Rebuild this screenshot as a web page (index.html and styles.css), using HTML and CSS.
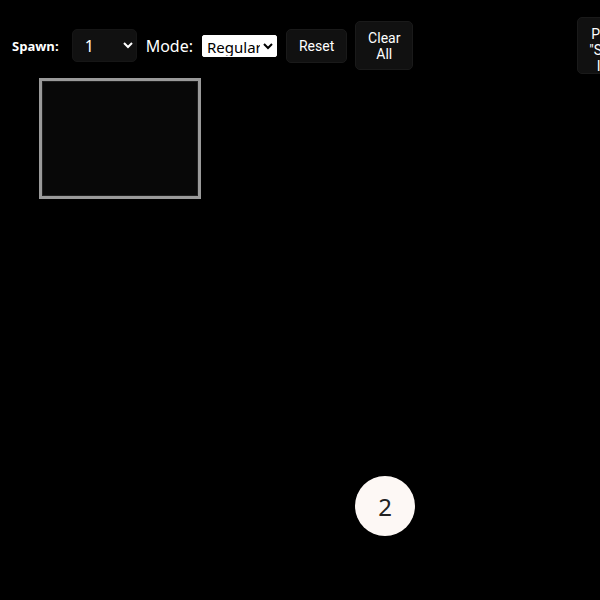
FILE: index.html
```html
<!DOCTYPE html>
<html lang="en">
<head>
<meta charset="utf-8">
<title>Spawner</title>
<link rel="stylesheet" href="styles.css">
</head>
<body>
  <div class="toolbar">
    <label class="spawn-label" for="spawn-count">Spawn:</label>
    <select id="spawn-count" class="dark-select">
      <option>1</option>
      <option>2</option>
      <option>5</option>
      <option>10</option>
    </select>
    <label class="mode-label" for="mode">Mode:</label>
    <select id="mode" class="mode-select">
      <option>Regular</option>
      <option>Chaos</option>
    </select>
    <button class="btn">Reset</button>
    <button class="btn btn-narrow">Clear<br>All</button>
    <button class="btn btn-help">Press<br>"Start"<br>Info</button>
  </div>

  <div class="stage">
    <div class="spawn-zone"></div>
    <div class="ball">2</div>
  </div>
</body>
</html>
```

FILE: styles.css
```css
html, body {
  margin: 0;
  padding: 0;
  background: #000;
  width: 600px;
  height: 600px;
  overflow: hidden;
}

body {
  font-family: "Noto Sans", "Open Sans", sans-serif;
  color: #fff;
}

.toolbar {
  display: flex;
  align-items: center;
  width: 700px;
  height: 57px;
  margin-top: 17px;
  padding-left: 12px;
  box-sizing: border-box;
}

.toolbar > * {
  flex-shrink: 0;
}

.spawn-label {
  font-family: "Open Sans", sans-serif;
  font-weight: 700;
  font-size: 13px;
  margin-right: 13px;
}

.dark-select {
  width: 65px;
  height: 33px;
  background: #111;
  color: #fff;
  border: 1px solid #161616;
  border-radius: 5px;
  font-family: "Noto Sans", sans-serif;
  font-size: 16px;
  padding: 0 0 0 8px;
  color-scheme: dark;
  margin-right: 9px;
}

.mode-label {
  font-family: "Noto Sans", sans-serif;
  font-size: 16px;
  margin-right: 9px;
}

.mode-select {
  width: 75px;
  height: 22px;
  background: #fff;
  color: #000;
  border: 1px solid #fff;
  border-radius: 2px;
  font-family: "Noto Sans", sans-serif;
  font-size: 15px;
  padding: 0;
  margin-right: 9px;
}

.btn {
  background: #111;
  color: #fff;
  border: 1px solid #1a1a1a;
  border-radius: 5px;
  font-family: Roboto, sans-serif;
  font-size: 14px;
  line-height: 16px;
  padding: 8px 12px;
  margin-right: 8px;
  height: 34px;
}

.btn-narrow {
  height: 49px;
  width: 58px;
  padding: 8px 10px;
}

.btn-help {
  height: 57px;
  margin-left: 156px;
  padding: 8px 11px;
}

.stage {
  position: relative;
  height: 526px;
}

.spawn-zone {
  width: 156px;
  height: 115px;
  margin: 4px 0 0 39px;
  border: 3px solid #9a9a9a;
  background: #080808;
  box-shadow: inset 0 0 0 1px #1e1e1e;
}

.ball {
  position: absolute;
  left: 355px;
  top: 398px;
  width: 60px;
  height: 60px;
  border-radius: 50%;
  background: #fdf8f5;
  color: #222;
  font-family: "Noto Sans", sans-serif;
  font-size: 24px;
  display: flex;
  align-items: center;
  justify-content: center;
}
```
